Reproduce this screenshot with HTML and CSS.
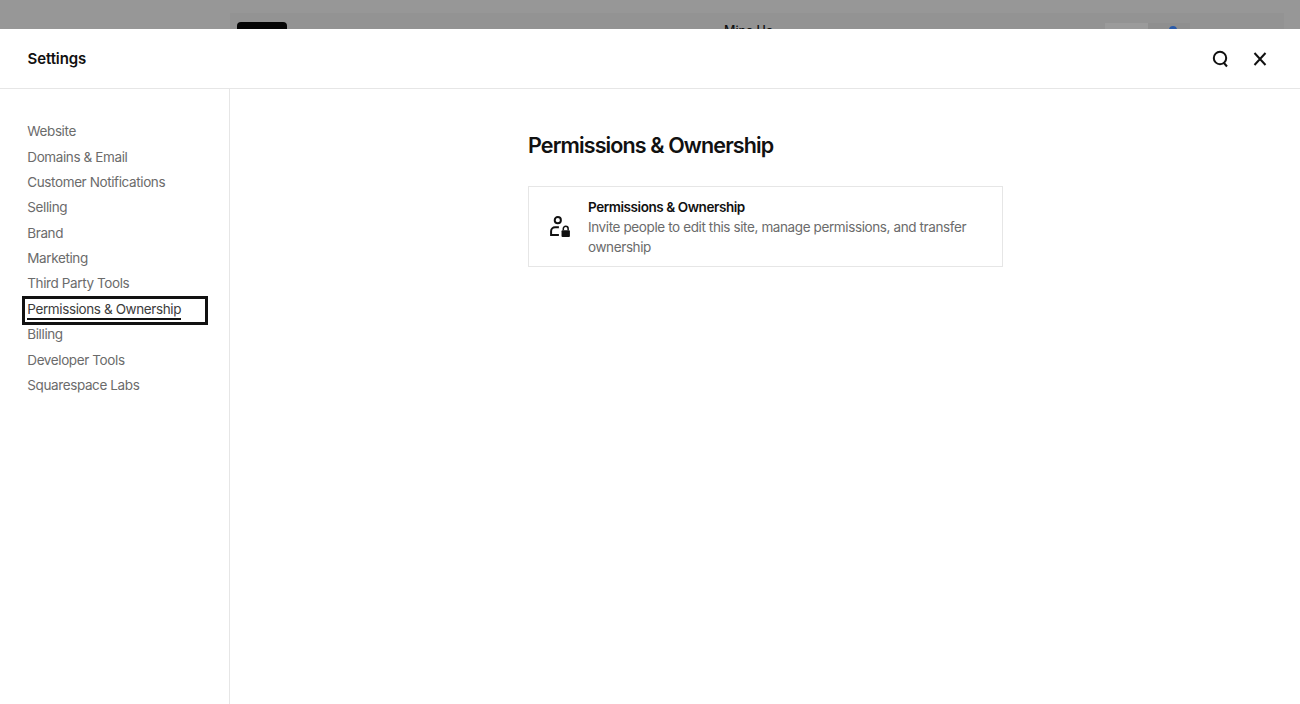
FILE: index.html
```html
<!DOCTYPE html>
<html lang="en">
<head>
  <meta charset="UTF-8" />
  <title>Settings</title>
  <link rel="stylesheet" href="styles.css">
</head>
<body>

<!-- Editor behind the panel, mostly hidden -->
<div class="backdrop">
  <div class="site-bar">
    <div class="logo-tab"></div>
    <div class="site-name">Mina Ho</div>
    <div class="bar-tools">
      <div class="tool-light"></div>
      <div class="tool-dark"><span class="tool-dot"></span></div>
    </div>
  </div>
</div>

<div class="panel">
  <header class="panel-head">
    <h2 class="panel-title">Settings</h2>
    <div class="head-icons">
      <svg class="head-icon" viewBox="0 0 20 20" fill="none" stroke="#111" stroke-width="2">
        <circle cx="10" cy="9" r="6.200"/>
        <path d="M13.500 13.500l3.500 4"/>
      </svg>
      <svg class="head-icon" viewBox="0 0 20 20" fill="none" stroke="#111" stroke-width="2">
        <path d="M4.500 4l11 12M15.500 4l-11 12"/>
      </svg>
    </div>
  </header>

  <div class="panel-body">
    <nav class="side-nav">
      <a class="nav-item">Website</a>
      <a class="nav-item">Domains &amp; Email</a>
      <a class="nav-item">Customer Notifications</a>
      <a class="nav-item">Selling</a>
      <a class="nav-item">Brand</a>
      <a class="nav-item">Marketing</a>
      <a class="nav-item">Third Party Tools</a>
      <a class="nav-item active"><span>Permissions &amp; Ownership</span></a>
      <a class="nav-item">Billing</a>
      <a class="nav-item">Developer Tools</a>
      <a class="nav-item">Squarespace Labs</a>
    </nav>

    <main class="content">
      <div class="content-inner">
        <h1 class="page-title">Permissions &amp; Ownership</h1>
        <div class="card">
          <svg class="card-icon" viewBox="0 0 20 20" fill="none" stroke="#111" stroke-width="1.800">
            <circle cx="8" cy="3.800" r="2.800"/>
            <path d="M9 10.200H5.500a3.600 3.600 0 0 0-3.600 3.600v3.400H9"/>
            <path d="M13 13v-1.500a2.200 2.200 0 0 1 4.400 0V13" stroke-width="1.400"/>
            <rect x="11.400" y="13" width="7.600" height="6" rx="0.800" fill="#111" stroke="none"/>
          </svg>
          <div class="card-text">
            <div class="card-title">Permissions &amp; Ownership</div>
            <div class="card-desc">Invite people to edit this site, manage permissions, and transfer ownership</div>
          </div>
        </div>
      </div>
    </main>
  </div>
</div>

</body>
</html>
```

FILE: styles.css
```css
* {
  margin: 0;
  padding: 0;
  box-sizing: border-box;
}

html, body {
  height: 100%;
  overflow: hidden;
}

body {
  font-family: 'Inter', 'Liberation Sans', sans-serif;
  background-color: #979797;
  color: #111;
  display: flex;
  flex-direction: column;
}

/* Editor behind the panel */
.backdrop {
  height: 29px;
  flex-shrink: 0;
  overflow: hidden;
  padding-top: 13px;
}

.site-bar {
  height: 40px;
  margin: 0 16px 0 230px;
  background-color: #939393;
  display: flex;
  padding-top: 9px;
  padding-left: 7px;
}

.logo-tab {
  width: 50px;
  height: 20px;
  background-color: #050505;
  border-radius: 4px;
}

.site-name {
  margin-left: 437px;
  font-size: 12.500px;
  line-height: 18px;
  color: #111;
  font-weight: 500;
}

.bar-tools {
  margin-left: auto;
  margin-right: 94px;
  display: flex;
  height: 20px;
  margin-top: 1px;
}

.tool-light {
  width: 43px;
  background-color: #9b9b9b;
}

.tool-dark {
  width: 42px;
  background-color: #8f8f8f;
  padding: 3px 0 0 21px;
}

.tool-dot {
  display: block;
  width: 8px;
  height: 8px;
  border-radius: 50%;
  background-color: #2a5aa8;
}

/* Settings panel */
.panel {
  flex: 1;
  min-height: 0;
  background-color: #fff;
  display: flex;
  flex-direction: column;
}

.panel-head {
  height: 60px;
  flex-shrink: 0;
  border-bottom: 1px solid #e6e6e6;
  display: flex;
  align-items: center;
  justify-content: space-between;
  padding: 0 30px 0 27.500px;
}

.panel-title {
  font-size: 15px;
  font-weight: 600;
  letter-spacing: -0.1px;
  color: #111;
}

.head-icons {
  display: flex;
  gap: 20px;
}

.head-icon {
  width: 20px;
  height: 20px;
  display: block;
}

.panel-body {
  flex: 1;
  min-height: 0;
  display: flex;
}

.side-nav {
  width: 230px;
  flex-shrink: 0;
  border-right: 1px solid #e6e6e6;
  padding: 30.300px 21px 0 22px;
  display: flex;
  flex-direction: column;
}

.nav-item {
  display: block;
  height: 25.360px;
  line-height: 25px;
  padding-left: 5.300px;
  font-size: 13.500px;
  letter-spacing: -0.39px;
  color: #6b6b6b;
  white-space: nowrap;
}

.nav-item.active {
  color: #3c3c3c;
  outline: 3px solid #111;
  outline-offset: -3px;
  height: 29px;
  margin-top: -0.800px;
  margin-bottom: -2.840px;
  padding-top: 3.800px;
  line-height: 18px;
}

.nav-item.active span {
  display: block;
  width: fit-content;
  border-bottom: 2px solid #111;
}

.content {
  flex: 1;
  min-width: 0;
  padding-left: 298px;
}

.content-inner {
  width: 475px;
}

.page-title {
  font-size: 21.500px;
  font-weight: 600;
  letter-spacing: -0.88px;
  color: #111;
  line-height: 28px;
  margin-top: 42px;
  margin-bottom: 27px;
}

.card {
  height: 81px;
  border: 1px solid #e6e6e6;
  display: flex;
  align-items: center;
  padding: 0 30px 0 20px;
  gap: 17px;
}

.card-icon {
  width: 22px;
  height: 22px;
  flex-shrink: 0;
}

.card-title {
  font-size: 13.500px;
  font-weight: 600;
  letter-spacing: -0.43px;
  line-height: 20px;
  color: #111;
}

.card-desc {
  font-size: 13.500px;
  letter-spacing: -0.39px;
  line-height: 20px;
  color: #6b6b6b;
}
```
